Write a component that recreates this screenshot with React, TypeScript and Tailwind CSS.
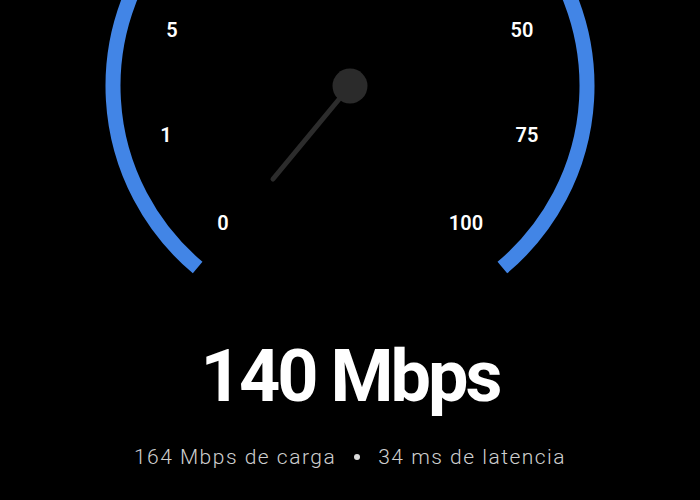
import React from 'react';

const labels = [
  { t: '5', x: 172, y: 30 },
  { t: '50', x: 522, y: 30 },
  { t: '1', x: 166, y: 135 },
  { t: '75', x: 527, y: 135 },
  { t: '0', x: 223, y: 223 },
  { t: '100', x: 466, y: 223 },
];

function Gauge() {
  const cx = 350;
  const cy = 86;
  const r = 237;
  const a0 = (130 * Math.PI) / 180;
  const a1 = (50 * Math.PI) / 180;
  const sx = cx + r * Math.cos(a0);
  const sy = cy + r * Math.sin(a0);
  const ex = cx + r * Math.cos(a1);
  const ey = cy + r * Math.sin(a1);

  return (
    <svg width="700" height="300" viewBox="0 0 700 300" className="block shrink-0">
      <path
        d={`M ${sx} ${sy} A ${r} ${r} 0 1 1 ${ex} ${ey}`}
        fill="none"
        stroke="#4285e6"
        strokeWidth="15"
      />
      {labels.map((l) => (
        <text
          key={l.t}
          x={l.x}
          y={l.y}
          textAnchor="middle"
          dominantBaseline="central"
          fill="#ffffff"
          fontFamily="Roboto, sans-serif"
          fontWeight="600"
          fontSize="20"
        >
          {l.t}
        </text>
      ))}
      <line x1={cx} y1={cy} x2="273" y2="179" stroke="#2c2c2c" strokeWidth="5" strokeLinecap="round" />
      <circle cx={cx} cy={cy} r="17.5" fill="#2b2b2b" />
    </svg>
  );
}

export default function App() {
  return (
    <div className="w-[700px] h-[500px] bg-black flex flex-col items-center overflow-hidden font-['Roboto',sans-serif]">
      <Gauge />
      <h1 className="mt-[27px] text-[72px] leading-[100px] font-bold text-white tracking-[-3px]">140 Mbps</h1>
      <p className="mt-[16px] text-[21px] leading-[28px] font-light text-[#cfcfcf] tracking-[1.5px] flex items-center gap-[18px]">
        <span>164 Mbps de carga</span>
        <span className="w-[6px] h-[6px] rounded-full bg-[#dcdcdc]" />
        <span>34 ms de latencia</span>
      </p>
    </div>
  );
}
